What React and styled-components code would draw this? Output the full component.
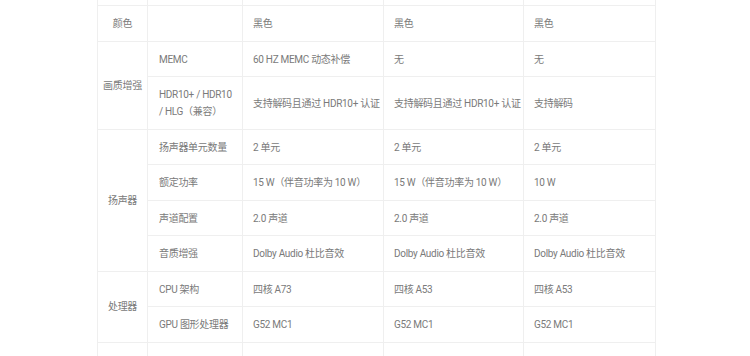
import styled, { createGlobalStyle } from "styled-components";

const GlobalStyle = createGlobalStyle`
  html, body {
    margin: 0;
    padding: 0;
    background: #fff;
  }
  body {
    font-family: "Roboto", "Noto Sans CJK SC", sans-serif;
    -webkit-font-smoothing: antialiased;
  }
`;

const Page = styled.div`
  width: 750px;
  height: 356px;
  overflow: hidden;
  padding-left: 97px;
  box-sizing: border-box;
`;

const Table = styled.table`
  width: 558px;
  margin-top: -30.5px;
  border-collapse: collapse;
  table-layout: fixed;
  font-size: 10px;
  line-height: 17px;
  letter-spacing: -0.3px;
  color: #7a7a7a;
`;

const Cell = styled.td`
  border: 1px solid #efefef;
  padding: 9px 4px 8.5px 10px;
  vertical-align: middle;
  text-align: left;
  white-space: nowrap;
`;

const Category = styled(Cell)`
  padding: 9px 0 8.5px;
  text-align: center;
`;

const Sub = styled(Cell)`
  padding-left: 11px;
  white-space: normal;
`;

const columns = [50, 95, 141, 140, 132];

const groups = [
  {
    name: "颜色",
    rows: [{ label: "", values: ["黑色", "黑色", "黑色"] }],
  },
  {
    name: "画质增强",
    rows: [
      { label: "MEMC", values: ["60 HZ MEMC 动态补偿", "无", "无"] },
      {
        label: "HDR10+ / HDR10 /\u00a0HLG（兼容）",
        values: ["支持解码且通过 HDR10+ 认证", "支持解码且通过 HDR10+ 认证", "支持解码"],
      },
    ],
  },
  {
    name: "扬声器",
    rows: [
      { label: "扬声器单元数量", values: ["2 单元", "2 单元", "2 单元"] },
      {
        label: "额定功率",
        values: ["15 W（伴音功率为 10 W）", "15 W（伴音功率为 10 W）", "10 W"],
      },
      { label: "声道配置", values: ["2.0 声道", "2.0 声道", "2.0 声道"] },
      {
        label: "音质增强",
        values: ["Dolby Audio 杜比音效", "Dolby Audio 杜比音效", "Dolby Audio 杜比音效"],
      },
    ],
  },
  {
    name: "处理器",
    rows: [
      { label: "CPU 架构", values: ["四核 A73", "四核 A53", "四核 A53"] },
      { label: "GPU 图形处理器", values: ["G52 MC1", "G52 MC1", "G52 MC1"] },
    ],
  },
];

function EmptyRow() {
  return (
    <tr>
      <Category>&nbsp;</Category>
      <Sub>&nbsp;</Sub>
      <Cell>&nbsp;</Cell>
      <Cell>&nbsp;</Cell>
      <Cell>&nbsp;</Cell>
    </tr>
  );
}

export default function App() {
  return (
    <>
      <GlobalStyle />
      <Page>
        <Table>
          <colgroup>
            {columns.map((w, i) => (
              <col key={i} style={{ width: w }} />
            ))}
          </colgroup>
          <tbody>
            <EmptyRow />
            {groups.map((group) =>
              group.rows.map((row, i) => (
                <tr key={group.name + i}>
                  {i === 0 && (
                    <Category rowSpan={group.rows.length}>{group.name}</Category>
                  )}
                  <Sub>{row.label}</Sub>
                  {row.values.map((v, j) => (
                    <Cell key={j}>{v}</Cell>
                  ))}
                </tr>
              ))
            )}
            <EmptyRow />
          </tbody>
        </Table>
      </Page>
    </>
  );
}
